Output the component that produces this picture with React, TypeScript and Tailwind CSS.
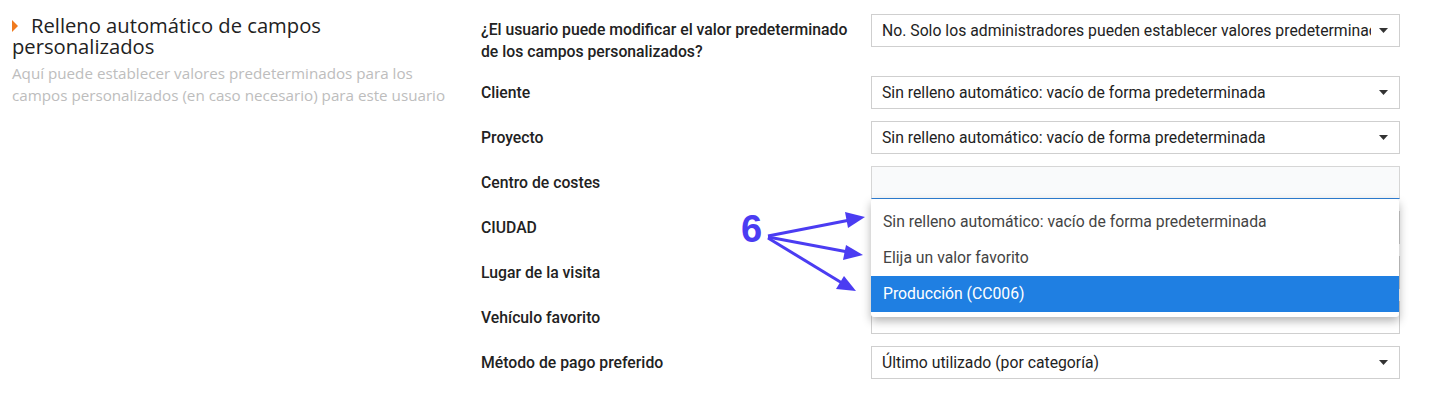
import React from 'react';

const Caret = () => (
  <svg width="9" height="5" viewBox="0 0 9 5" className="shrink-0">
    <path d="M0 0 L9 0 L4.5 5 Z" fill="#333" />
  </svg>
);

const Select = ({ value, caret = true }: { value?: string; caret?: boolean }) => (
  <div className="w-[529px] h-[33px] border border-[#cfcfcf] bg-white flex items-center pl-[10px] pr-[11px] gap-2">
    <span className="flex-1 overflow-hidden whitespace-nowrap text-[15.75px] text-[#222]">{value}</span>
    {caret && <Caret />}
  </div>
);

const Row = ({ label, children }: { label: string; children: React.ReactNode }) => (
  <div className="flex items-center h-[33px]">
    <div className="w-[390px] text-[15.75px] font-medium text-[#222]">{label}</div>
    {children}
  </div>
);

const options = [
  'Sin relleno automático: vacío de forma predeterminada',
  'Elija un valor favorito',
  'Producción (CC006)',
];

export default function App() {
  return (
    <div className="w-[1444px] h-[406px] bg-white relative flex font-['Roboto',sans-serif]">
      {/* left: section heading */}
      <div className="w-[481px] pl-3 pt-[15px] font-['Open_Sans',sans-serif]">
        <div className="w-[440px]">
          <div className="relative text-[20.2px] leading-[21px] text-[#222] indent-[19px]">
            <span className="absolute left-0 top-[5px] w-0 h-0 border-y-[6px] border-y-transparent border-l-[6px] border-l-[#f07a1e]" />
            Relleno automático de campos personalizados
          </div>
          <p className="mt-[5px] text-[15.2px] leading-[22px] text-[#bdbdbd]">
            Aquí puede establecer valores predeterminados para los campos personalizados (en caso necesario) para este usuario
          </p>
        </div>
      </div>

      {/* right: form */}
      <div className="flex flex-col pt-[14px]">
        <div className="flex items-start">
          <div className="w-[390px] pt-[5px] pr-[20px] text-[15.75px] leading-[22px] font-medium text-[#222]">
            ¿El usuario puede modificar el valor predeterminado de los campos personalizados?
          </div>
          <Select value="No. Solo los administradores pueden establecer valores predeterminados" />
        </div>

        <div className="mt-[13px] flex flex-col gap-[12px]">
          <Row label="Cliente">
            <Select value="Sin relleno automático: vacío de forma predeterminada" />
          </Row>
          <Row label="Proyecto">
            <Select value="Sin relleno automático: vacío de forma predeterminada" />
          </Row>
          <Row label="Centro de costes">
            <div className="relative z-10">
              <div className="w-[529px] h-[33px] border border-[#d6d6d6] border-b-[#2f7fd6] bg-[#f9fafb]" />
              <div className="absolute left-0 top-full w-[528px] bg-white rounded-[3px] shadow-[0_4px_10px_rgba(0,0,0,0.3)] py-[5px]">
                {options.map((o, i) => (
                  <div
                    key={o}
                    className={
                      i === 2
                        ? 'h-[36px] flex items-center px-3 text-[15.75px] text-white bg-[#1f7fe2]'
                        : 'h-[36px] flex items-center px-3 text-[15.75px] text-[#444]'
                    }
                  >
                    {o}
                  </div>
                ))}
              </div>
            </div>
          </Row>
          <Row label="CIUDAD">
            <Select caret={false} />
          </Row>
          <Row label="Lugar de la visita">
            <Select caret={false} />
          </Row>
          <Row label="Vehículo favorito">
            <Select caret={false} />
          </Row>
          <Row label="Método de pago preferido">
            <Select value="Último utilizado (por categoría)" />
          </Row>
        </div>
      </div>

      {/* annotation */}
      <div className="absolute left-[741px] top-[201px] text-[38px] font-bold text-[#4b3cf2] font-['Liberation_Sans',sans-serif] z-20">
        6
      </div>
      <svg className="absolute left-0 top-0 z-20 pointer-events-none" width="1444" height="406">
        <g stroke="#4b3cf2" strokeWidth="3" fill="#4b3cf2">
          <line x1="768" y1="236" x2="850" y2="220" />
          <line x1="768" y1="237" x2="848" y2="252" />
          <line x1="768" y1="238" x2="842" y2="283" />
        </g>
        <g fill="#4b3cf2">
          <polygon points="865,217 845,212 848,228" />
          <polygon points="863,255 846,245 843,260" />
          <polygon points="856,291 844,276 836,289" />
        </g>
      </svg>
    </div>
  );
}
